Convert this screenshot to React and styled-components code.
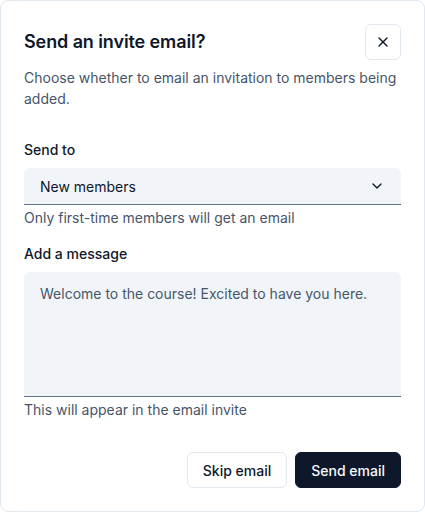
import styled, { createGlobalStyle } from 'styled-components'
import { X, ChevronDown } from 'lucide-react'

const GlobalStyle = createGlobalStyle`
  * {
    margin: 0;
    padding: 0;
    box-sizing: border-box;
  }
  body {
    background: #ffffff;
    font-family: Inter, "Liberation Sans", sans-serif;
    -webkit-font-smoothing: antialiased;
  }
`

const Card = styled.div`
  width: 425px;
  height: 512px;
  border: 1px solid #e2e8f0;
  border-radius: 8px;
  background: #ffffff;
  padding: 23px;
  display: flex;
  flex-direction: column;
`

const Header = styled.div`
  display: flex;
  align-items: center;
  justify-content: space-between;
`

const Title = styled.h2`
  font-size: 18px;
  font-weight: 600;
  color: #0f172a;
  line-height: 28px;
  letter-spacing: -0.1px;
`

const IconButton = styled.button`
  width: 36px;
  height: 36px;
  display: flex;
  align-items: center;
  justify-content: center;
  border: 1px solid #e2e8f0;
  border-radius: 6px;
  background: #ffffff;
  color: #0f172a;
  cursor: pointer;
`

const Description = styled.p`
  margin-top: 7px;
  font-size: 14px;
  line-height: 21px;
  color: #475569;
`

const Field = styled.div`
  display: flex;
  flex-direction: column;
  margin-top: ${props => props.top || '0'};
`

const Label = styled.label`
  font-size: 14px;
  font-weight: 500;
  line-height: 20px;
  color: #0f172a;
  margin-bottom: 8px;
`

const Select = styled.div`
  height: 37px;
  display: flex;
  align-items: center;
  justify-content: space-between;
  padding: 0 16px;
  background: #f1f5f9;
  border-radius: 6px 6px 0 0;
  border-bottom: 1px solid #64748b;
  font-size: 14px;
  color: #0f172a;
`

const TextArea = styled.div`
  height: 125px;
  padding: 12px 16px;
  background: #f1f5f9;
  border-radius: 6px 6px 0 0;
  border-bottom: 1px solid #64748b;
  font-size: 14px;
  line-height: 20px;
  color: #475569;
`

const Helper = styled.span`
  margin-top: 3px;
  font-size: 14px;
  line-height: 20px;
  color: #475569;
`

const Footer = styled.div`
  margin-top: auto;
  display: flex;
  justify-content: flex-end;
  gap: 8px;
`

const Button = styled.button`
  height: 36px;
  padding: 0 15px;
  border-radius: 6px;
  font-family: inherit;
  font-size: 14px;
  font-weight: 500;
  cursor: pointer;
  border: 1px solid ${props => (props.primary ? '#0f172a' : '#e2e8f0')};
  background: ${props => (props.primary ? '#0f172a' : '#ffffff')};
  color: ${props => (props.primary ? '#f8fafc' : '#0f172a')};
`

function App() {
  return (
    <>
      <GlobalStyle />
      <Card>
        <Header>
          <Title>Send an invite email?</Title>
          <IconButton aria-label="Close">
            <X size={16} strokeWidth={2} />
          </IconButton>
        </Header>
        <Description>
          Choose whether to email an invitation to members being added.
        </Description>

        <Field top="31px">
          <Label>Send to</Label>
          <Select>
            <span>New members</span>
            <ChevronDown size={16} strokeWidth={2} />
          </Select>
          <Helper>Only first-time members will get an email</Helper>
        </Field>

        <Field top="16px">
          <Label>Add a message</Label>
          <TextArea>Welcome to the course! Excited to have you here.</TextArea>
          <Helper>This will appear in the email invite</Helper>
        </Field>

        <Footer>
          <Button>Skip email</Button>
          <Button primary>Send email</Button>
        </Footer>
      </Card>
    </>
  )
}

export default App
